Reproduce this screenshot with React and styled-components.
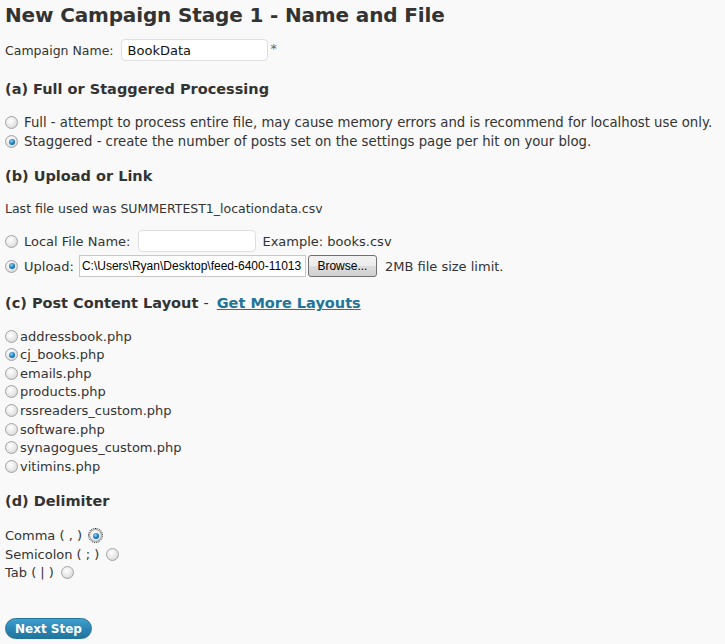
import React from "react";
import styled, { createGlobalStyle } from "styled-components";

const layouts = [
  "addressbook.php",
  "cj_books.php",
  "emails.php",
  "products.php",
  "rssreaders_custom.php",
  "software.php",
  "synagogues_custom.php",
  "vitimins.php",
];

const delimiters = [
  { label: "Comma ( , )", checked: true },
  { label: "Semicolon ( ; )", checked: false },
  { label: "Tab ( | )", checked: false },
];

function App() {
  return (
    <Page>
      <GlobalStyle />
      <Title>New Campaign Stage 1 - Name and File</Title>

      <FieldRow $mt={8}>
        <Label $right={7} $size={12.5}>Campaign Name:</Label>
        <TextInput type="text" defaultValue="BookData" $width={147} />
        <Star>*</Star>
      </FieldRow>

      <Heading $mt={15}>(a) Full or Staggered Processing</Heading>
      <RadioGroup>
        <RadioLine>
          <Radio type="radio" name="proc" />
          Full - attempt to process entire file, may cause memory errors and is recommend for localhost use only.
        </RadioLine>
        <RadioLine>
          <Radio type="radio" name="proc" defaultChecked />
          Staggered - create the number of posts set on the settings page per hit on your blog.
        </RadioLine>
      </RadioGroup>

      <Heading $mt={13}>(b) Upload or Link</Heading>
      <Note>Last file used was SUMMERTEST1_locationdata.csv</Note>

      <FieldRow $mt={11}>
        <Radio type="radio" name="src" />
        <Label $right={8}>Local File Name:</Label>
        <TextInput type="text" $width={118} />
        <Hint $left={6}>Example: books.csv</Hint>
      </FieldRow>
      <FieldRow $mt={1}>
        <Radio type="radio" name="src" defaultChecked />
        <Label $right={5}>Upload:</Label>
        <FileBox>
          <FilePath>C:\Users\Ryan\Desktop\feed-6400-11013</FilePath>
          <Browse type="button">Browse...</Browse>
        </FileBox>
        <Hint $left={8}>2MB file size limit.</Hint>
      </FieldRow>

      <Heading $mt={13}>
        (c) Post Content Layout <Dash>-</Dash> <MoreLink href="#">Get More Layouts</MoreLink>
      </Heading>
      <List $mt={12}>
        {layouts.map((name) => (
          <ListItem key={name}>
            <Radio type="radio" name="layout" defaultChecked={name === "cj_books.php"} $tight />
            {name}
          </ListItem>
        ))}
      </List>

      <Heading $mt={13}>(d) Delimiter</Heading>
      <List $mt={14}>
        {delimiters.map((d) => (
          <ListItem key={d.label}>
            {d.label}
            <Radio type="radio" name="delim" defaultChecked={d.checked} $after $focus={d.checked} />
          </ListItem>
        ))}
      </List>

      <NextButton type="button">Next Step</NextButton>
    </Page>
  );
}

export default App;

const GlobalStyle = createGlobalStyle`
  html, body {
    margin: 0;
    padding: 0;
    background: #f9f9f9;
  }
  body {
    font-family: "DejaVu Sans", Verdana, sans-serif;
    color: #333;
  }
`;

const Page = styled.div`
  display: flex;
  flex-direction: column;
  align-items: flex-start;
  padding: 0 5px;
  height: 644px;
  box-sizing: border-box;
  font-size: 12px;
`;

const Title = styled.h2`
  margin: 0;
  font-size: 20px;
  line-height: 30px;
  font-weight: bold;
  color: #333;
  letter-spacing: -0.15px;
`;

const FieldRow = styled.div`
  display: flex;
  align-items: center;
  height: 24px;
  margin-top: ${(p) => p.$mt}px;
  font-size: 13px;
`;

const Label = styled.span`
  margin-right: ${(p) => p.$right}px;
  font-size: ${(p) => (p.$size ? `${p.$size}px` : "inherit")};
`;

const Hint = styled.span`
  margin-left: ${(p) => p.$left}px;
`;

const TextInput = styled.input`
  width: ${(p) => p.$width}px;
  height: 22px;
  box-sizing: border-box;
  border: 1px solid #dfdfdf;
  border-radius: 4px;
  background: #fff;
  padding: 0 6px;
  font-family: "DejaVu Sans", Verdana, sans-serif;
  font-size: 13px;
  color: #111;
  outline: none;
`;

const Star = styled.span`
  margin-left: 3px;
  color: #666;
  align-self: flex-start;
  margin-top: 3px;
`;

const Heading = styled.h3`
  margin: ${(p) => p.$mt}px 0 0;
  font-size: 14.5px;
  line-height: 24px;
  font-weight: bold;
  color: #333;
`;

const Dash = styled.span`
  font-weight: normal;
`;

const MoreLink = styled.a`
  color: #21759b;
  text-decoration: underline;
  margin-left: 3px;
`;

const RadioGroup = styled.div`
  display: flex;
  flex-direction: column;
  margin-top: 12px;
`;

const RadioLine = styled.label`
  display: flex;
  align-items: center;
  height: 19px;
  font-size: 13.25px;
  white-space: nowrap;
`;

const Note = styled.p`
  margin: 11px 0 0;
  line-height: 19px;
  font-size: 12.5px;
`;

const Radio = styled.input`
  appearance: none;
  -webkit-appearance: none;
  width: 13px;
  height: 13px;
  margin: ${(p) => (p.$tight ? "0 2px 0 0" : p.$after ? "0 0 0 7px" : "0 6px 0 0")};
  border-radius: 50%;
  border: 1px solid #a4a4a4;
  background: radial-gradient(circle at 40% 35%, #ffffff 0%, #e6e6e6 55%, #c8c8c8 100%);
  box-sizing: border-box;
  flex: none;
  position: relative;
  outline: ${(p) => (p.$focus ? "1px dotted #222" : "none")};
  outline-offset: 0;

  &:checked::after {
    content: "";
    position: absolute;
    left: 2.5px;
    top: 2.5px;
    width: 6px;
    height: 6px;
    border-radius: 50%;
    background: radial-gradient(circle at 40% 35%, #8fd3f5 0%, #1d7fc0 50%, #0b4f85 100%);
  }
`;

const FileBox = styled.div`
  display: flex;
  align-items: center;
  gap: 2px;
`;

const FilePath = styled.span`
  width: 227px;
  height: 22px;
  box-sizing: border-box;
  border: 1px solid #c8c8c8;
  background: #fff;
  padding: 0 2px;
  font-family: "Liberation Sans", Arial, sans-serif;
  font-size: 12px;
  line-height: 20px;
  color: #000;
  overflow: hidden;
  white-space: nowrap;
`;

const Browse = styled.button`
  width: 69px;
  height: 22px;
  border: 1px solid #707070;
  border-radius: 3px;
  background: linear-gradient(#f2f2f2 0%, #ebebeb 50%, #dddddd 51%, #cfcfcf 100%);
  font-family: "Liberation Sans", Arial, sans-serif;
  font-size: 12px;
  color: #000;
  padding: 0;
`;

const List = styled.div`
  display: flex;
  flex-direction: column;
  margin-top: ${(p) => p.$mt}px;
  font-size: 13px;
`;

const ListItem = styled.label`
  display: flex;
  align-items: center;
  height: 18.57px;
  white-space: nowrap;
`;

const NextButton = styled.button`
  margin-top: 36px;
  width: 87px;
  height: 21px;
  box-sizing: border-box;
  border: 1px solid #21759b;
  border-radius: 11px;
  background: linear-gradient(#3fa0cf 0%, #2b86b6 50%, #21759b 100%);
  color: #fff;
  font-family: "DejaVu Sans", Verdana, sans-serif;
  font-size: 12px;
  font-weight: bold;
  padding: 0;
`;
